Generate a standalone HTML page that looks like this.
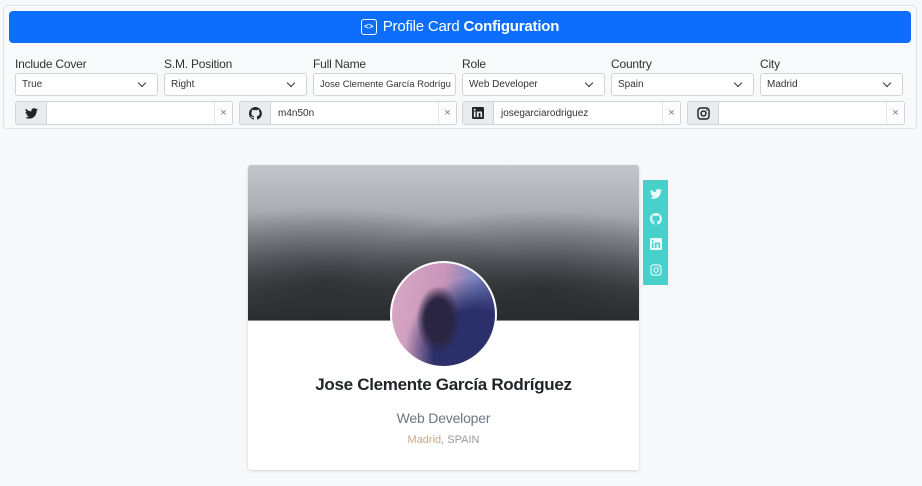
<!DOCTYPE html>
<html><head><meta charset="utf-8"><style>
*{box-sizing:border-box;margin:0;padding:0}
body{width:922px;height:486px;background:#f7f8fa;font-family:"Liberation Sans",sans-serif;position:relative;overflow:hidden;color:#212529}
.panel{position:absolute;left:3px;top:5px;width:914px;height:124px;background:#f8f9fa;border:1px solid #dee2e6;border-radius:4px}
.hdr{position:absolute;left:9px;top:11px;width:902px;height:32px;background:#0d6efd;border-radius:4px;color:#fff;font-size:15px;text-align:center;line-height:32px;letter-spacing:-0.2px}
.hdr .ic{display:inline-block;width:16px;height:16px;border:1.5px solid #fff;border-radius:3px;vertical-align:middle;position:relative;top:0;margin-right:6px;font-size:8px;line-height:13px;font-weight:bold;letter-spacing:0}
.lbl{position:absolute;top:57px;font-size:12px;color:#333;letter-spacing:-0.2px}
.sel{position:absolute;top:73px;width:143px;height:23px;background:#fff;border:1px solid #ced4da;border-radius:3px;font-size:10px;line-height:22px;padding-left:6px;color:#333;overflow:hidden;white-space:nowrap}
.sel.c:after{content:"";position:absolute;right:12px;top:6px;width:5px;height:5px;border-right:1.3px solid #333;border-bottom:1.3px solid #333;transform:rotate(45deg)}
.ig{position:absolute;top:101px;height:24px;background:#fff;border:1px solid #ced4da;border-radius:3px;font-size:10px;line-height:23px}
.ig .a{position:absolute;left:0;top:0;width:31px;height:22px;background:#e9ecef;border-right:1px solid #ced4da;display:flex;align-items:center;justify-content:center}
.ig .t{position:absolute;left:38px;color:#333}
.ig .x{position:absolute;right:0;top:0;width:18px;height:22px;border-left:1px solid #e5e5e5;text-align:center;color:#777;font-size:11px}
.card{position:absolute;left:248px;top:165px;width:391px;height:305px;background:#fff;border-radius:3px;box-shadow:0 1px 3px rgba(0,0,0,.15);overflow:hidden}
.cover{position:absolute;left:0;top:0;width:391px;height:156px;background:radial-gradient(ellipse at 20% 75%,rgba(30,33,36,.6),transparent 45%),radial-gradient(ellipse at 75% 80%,rgba(30,33,36,.6),transparent 45%),linear-gradient(180deg,#c3c6ca 0%,#a9adb1 30%,#7d8185 55%,#45484b 80%,#2d3033 100%);border-bottom:1px solid #888}
.av{position:absolute;left:390px;top:261px;width:107px;height:107px;border-radius:50%;border:2px solid #fff;background:radial-gradient(ellipse 22px 34px at 45% 55%,#2a2540 0 60%,transparent 100%),radial-gradient(ellipse at 80% 90%,#2b2f6a 0 35%,transparent 60%),linear-gradient(100deg,#d9a9c6 0%,#c895b8 45%,#7d86c0 70%,#3f4a8c 100%)}
.sm{position:absolute;left:643px;top:180px;width:25px;height:105px;background:#48d1cb;display:flex;flex-direction:column;align-items:center;justify-content:space-around;padding:2px 0}
.name{position:absolute;left:248px;width:391px;top:375px;text-align:center;font-weight:bold;font-size:17px;letter-spacing:-0.3px}
.role{position:absolute;left:248px;width:391px;top:410px;text-align:center;font-size:14px;color:#6c757d;letter-spacing:-0.2px}
.loc{position:absolute;left:248px;width:391px;top:434px;text-align:center;font-size:11px;color:#999}
</style></head><body>
<div class="panel"></div>
<div class="hdr"><span class="ic">&lt;&gt;</span>Profile Card <b>Configuration</b></div>
<div class="lbl" style="left:15px">Include Cover</div>
<div class="lbl" style="left:164px">S.M. Position</div>
<div class="lbl" style="left:313px">Full Name</div>
<div class="lbl" style="left:462px">Role</div>
<div class="lbl" style="left:611px">Country</div>
<div class="lbl" style="left:760px">City</div>
<div class="sel c" style="left:15px">True</div>
<div class="sel c" style="left:164px">Right</div>
<div class="sel" style="left:313px;font-size:9.5px">Jose Clemente García Rodrígu</div>
<div class="sel c" style="left:462px">Web Developer</div>
<div class="sel c" style="left:611px">Spain</div>
<div class="sel c" style="left:760px">Madrid</div>
<div class="ig" style="left:15px;width:218px"><div class="a"><svg width="13" height="11" viewBox="0 0 24 20"><path d="M24 2.4a10 10 0 0 1-2.8.8A5 5 0 0 0 23.3.5a10 10 0 0 1-3.1 1.2A4.9 4.9 0 0 0 11.8 6 14 14 0 0 1 1.7.9a4.9 4.9 0 0 0 1.5 6.6A4.9 4.9 0 0 1 1 6.9a4.9 4.9 0 0 0 3.9 4.9 5 5 0 0 1-2.2.1 4.9 4.9 0 0 0 4.6 3.4A9.9 9.9 0 0 1 0 17.3 14 14 0 0 0 7.5 19.5c9 0 14-7.5 14-14v-.6A10 10 0 0 0 24 2.4z" fill="#212529"/></svg></div><span class="x">×</span></div>
<div class="ig" style="left:239px;width:218px"><div class="a"><svg width="13" height="13" viewBox="0 0 16 16"><path d="M8 0a8 8 0 0 0-2.5 15.6c.4 0 .5-.2.5-.4v-1.5c-2.2.5-2.7-1-2.7-1-.4-.9-.9-1.2-.9-1.2-.7-.5.1-.5.1-.5.8.1 1.2.8 1.2.8.7 1.3 1.9.9 2.3.7.1-.5.3-.9.5-1.1-1.8-.2-3.6-.9-3.6-4 0-.9.3-1.6.8-2.1-.1-.2-.4-1 .1-2.1 0 0 .7-.2 2.2.8a7.4 7.4 0 0 1 4 0c1.5-1 2.2-.8 2.2-.8.4 1.1.2 1.9.1 2.1.5.6.8 1.3.8 2.1 0 3.1-1.9 3.8-3.6 4 .3.3.5.8.5 1.5v2.2c0 .2.1.5.6.4A8 8 0 0 0 8 0z" fill="#212529"/></svg></div><span class="t">m4n50n</span><span class="x">×</span></div>
<div class="ig" style="left:462px;width:219px"><div class="a"><svg width="12" height="12" viewBox="0 0 16 16"><rect width="16" height="16" rx="1.5" fill="#212529"/><rect x="2.5" y="6" width="2.2" height="7.5" fill="#e9ecef"/><circle cx="3.6" cy="3.7" r="1.3" fill="#e9ecef"/><path d="M6.5 6h2.1v1c.4-.7 1.3-1.2 2.4-1.2 2 0 2.5 1.3 2.5 3v4.7h-2.2V9.3c0-.9-.2-1.6-1.1-1.6-1 0-1.4.7-1.4 1.6v4.2H6.5z" fill="#e9ecef"/></svg></div><span class="t">josegarciarodriguez</span><span class="x">×</span></div>
<div class="ig" style="left:687px;width:218px"><div class="a"><svg width="13" height="13" viewBox="0 0 16 16"><rect x="1.2" y="1.2" width="13.6" height="13.6" rx="3.5" fill="none" stroke="#212529" stroke-width="1.8"/><circle cx="8" cy="8" r="3" fill="none" stroke="#212529" stroke-width="1.8"/><circle cx="12" cy="4" r=".9" fill="#212529"/></svg></div><span class="x">×</span></div>
<div class="card"><div class="cover"></div></div>
<div class="av"></div>
<div class="sm">
<svg width="12" height="10" viewBox="0 0 24 20"><path d="M24 2.4a10 10 0 0 1-2.8.8A5 5 0 0 0 23.3.5a10 10 0 0 1-3.1 1.2A4.9 4.9 0 0 0 11.8 6 14 14 0 0 1 1.7.9a4.9 4.9 0 0 0 1.5 6.6A4.9 4.9 0 0 1 1 6.9a4.9 4.9 0 0 0 3.9 4.9 5 5 0 0 1-2.2.1 4.9 4.9 0 0 0 4.6 3.4A9.9 9.9 0 0 1 0 17.3 14 14 0 0 0 7.5 19.5c9 0 14-7.5 14-14v-.6A10 10 0 0 0 24 2.4z" fill="#e8fbfa"/></svg>
<svg width="12" height="12" viewBox="0 0 16 16"><path d="M8 0a8 8 0 0 0-2.5 15.6c.4 0 .5-.2.5-.4v-1.5c-2.2.5-2.7-1-2.7-1-.4-.9-.9-1.2-.9-1.2-.7-.5.1-.5.1-.5.8.1 1.2.8 1.2.8.7 1.3 1.9.9 2.3.7.1-.5.3-.9.5-1.1-1.8-.2-3.6-.9-3.6-4 0-.9.3-1.6.8-2.1-.1-.2-.4-1 .1-2.1 0 0 .7-.2 2.2.8a7.4 7.4 0 0 1 4 0c1.5-1 2.2-.8 2.2-.8.4 1.1.2 1.9.1 2.1.5.6.8 1.3.8 2.1 0 3.1-1.9 3.8-3.6 4 .3.3.5.8.5 1.5v2.2c0 .2.1.5.6.4A8 8 0 0 0 8 0z" fill="#e8fbfa"/></svg>
<svg width="12" height="12" viewBox="0 0 16 16"><rect width="16" height="16" rx="1.5" fill="#e8fbfa"/><rect x="2.5" y="6" width="2.2" height="7.5" fill="#48d1cb"/><circle cx="3.6" cy="3.7" r="1.3" fill="#48d1cb"/><path d="M6.5 6h2.1v1c.4-.7 1.3-1.2 2.4-1.2 2 0 2.5 1.3 2.5 3v4.7h-2.2V9.3c0-.9-.2-1.6-1.1-1.6-1 0-1.4.7-1.4 1.6v4.2H6.5z" fill="#48d1cb"/></svg>
<svg width="12" height="12" viewBox="0 0 16 16"><rect x="1.2" y="1.2" width="13.6" height="13.6" rx="3.5" fill="none" stroke="#e8fbfa" stroke-width="1.5"/><circle cx="8" cy="8" r="3" fill="none" stroke="#e8fbfa" stroke-width="1.5"/><circle cx="12" cy="4" r=".9" fill="#e8fbfa"/></svg>
</div>
<div class="name">Jose Clemente García Rodríguez</div>
<div class="role">Web Developer</div>
<div class="loc"><span style="color:#c9a88a">Madrid</span>, SPAIN</div>
</body></html>
